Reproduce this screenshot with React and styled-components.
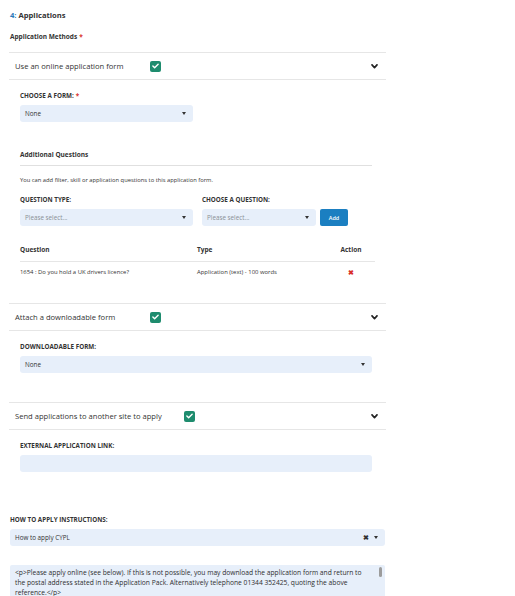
import React from "react";
import styled, { createGlobalStyle } from "styled-components";

const GlobalStyle = createGlobalStyle`
  body {
    margin: 0;
    background: #ffffff;
    font-family: "Open Sans", "Noto Sans", sans-serif;
    color: #333333;
    overflow: hidden;
  }
`;

const Page = styled.div`
  width: 515px;
  padding: 10px 0 0 0;
`;

const Wrap = styled.div`
  width: 377px;
  margin-left: 9px;
`;

const Title = styled.h2`
  margin: 0 0 0 1px;
  font-size: 7.6px;
  line-height: 11px;
  font-weight: 700;
  color: #333;
  span {
    color: #2a7ab8;
  }
`;

const MethodsLabel = styled.div`
  margin: 11px 0 11px 1px;
  font-size: 6.5px;
  line-height: 9px;
  font-weight: 700;
`;

const Req = styled.span`
  color: #d9302a;
  margin-left: 2px;
`;

const Section = styled.section`
  border-top: 1px solid #e6e6e6;
`;

const Header = styled.div`
  display: flex;
  align-items: center;
  height: 26px;
  padding: 0 8px 0 6px;
  border-bottom: 1px solid #e6e6e6;
  font-size: 7.6px;
  color: #333;
`;

const HeaderText = styled.span`
  width: ${(p) => p.$w}px;
`;

const Check = styled.span`
  width: 11px;
  height: 11px;
  border-radius: 2px;
  background: #1e8c6e;
  display: inline-flex;
  align-items: center;
  justify-content: center;
`;

const Chevron = styled.span`
  margin-left: auto;
  display: inline-flex;
`;

const Body = styled.div`
  padding: ${(p) => p.$pad};
`;

const FieldLabel = styled.div`
  font-size: 6.3px;
  line-height: 8px;
  font-weight: 700;
  text-transform: uppercase;
  color: #333;
  margin: 0 0 5px 0;
`;

const Select = styled.div`
  width: ${(p) => p.$w};
  height: 17px;
  border-radius: 3px;
  background: #e7effa;
  display: flex;
  align-items: center;
  padding: 0 7px 0 5px;
  box-sizing: border-box;
  font-size: 6.3px;
  color: ${(p) => (p.$placeholder ? "#8a8f96" : "#333")};
`;

const Caret = styled.span`
  margin-left: ${(p) => (p.$tight ? "0" : "auto")};
  width: 0;
  height: 0;
  border-left: 2.5px solid transparent;
  border-right: 2.5px solid transparent;
  border-top: 3px solid #333;
`;

const Clear = styled.span`
  margin-left: auto;
  margin-right: 5px;
  font-size: 7px;
  font-weight: 700;
  color: #333;
`;

const SubHeading = styled.div`
  margin-top: 29px;
  font-size: 6.5px;
  line-height: 8px;
  font-weight: 700;
  padding-bottom: 6px;
  border-bottom: 1px solid #e0e0e0;
  width: 352px;
`;

const Help = styled.div`
  margin: 10px 0 12px 0;
  font-size: 5.8px;
  line-height: 8px;
  color: #333;
`;

const QuestionGrid = styled.div`
  display: grid;
  grid-template-columns: 173px 114px 28px;
  column-gap: 9px;
  align-items: end;
`;

const AddButton = styled.button`
  width: 28px;
  height: 17px;
  margin-left: -5px;
  border: none;
  border-radius: 2px;
  background: #1b7fc1;
  color: #fff;
  font-family: inherit;
  font-size: 5.5px;
  font-weight: 600;
  padding: 0;
  cursor: pointer;
`;

const Table = styled.div`
  margin-top: 14px;
  width: 355px;
`;

const TRow = styled.div`
  display: grid;
  grid-template-columns: 177px 1fr 48px;
  align-items: center;
  height: ${(p) => p.$h}px;
  font-size: ${(p) => (p.$head ? "6.5px" : "5.9px")};
  font-weight: ${(p) => (p.$head ? 700 : 400)};
  border-bottom: ${(p) => (p.$head ? "1px solid #e6e6e6" : "none")};
  padding-bottom: ${(p) => (p.$head ? "2px" : "0")};
`;

const Cell = styled.span`
  text-align: ${(p) => p.$align || "left"};
  white-space: nowrap;
`;

const Remove = styled.span`
  color: #d9302a;
  font-size: 7px;
  font-weight: 700;
  text-align: center;
`;

const Instructions = styled.div`
  margin: 44px 0 0 1px;
`;

const TextArea = styled.div`
  position: relative;
  margin-top: 19px;
  width: 375px;
  height: 60px;
  background: #e7effa;
  border-radius: 2px;
  box-sizing: border-box;
  padding: 3px 12px 0 5px;
  font-size: 6.7px;
  line-height: 10px;
  color: #2e2e2e;
`;

const ScrollThumb = styled.span`
  position: absolute;
  right: 3px;
  top: 2px;
  width: 3px;
  height: 10px;
  border-radius: 2px;
  background: #9c9c9c;
`;

const CheckIcon = () => (
  <svg width="7" height="6" viewBox="0 0 8 6">
    <polyline points="1,3 3,5 7,1" fill="none" stroke="#fff" strokeWidth="1.6" strokeLinecap="round" strokeLinejoin="round" />
  </svg>
);

const ChevronIcon = () => (
  <svg width="7" height="5" viewBox="0 0 8 6">
    <polyline points="1,1 4,4.3 7,1" fill="none" stroke="#222" strokeWidth="2" strokeLinecap="round" strokeLinejoin="round" />
  </svg>
);

const MethodHeader = ({ label, w }) => (
  <Header>
    <HeaderText $w={w}>{label}</HeaderText>
    <Check>
      <CheckIcon />
    </Check>
    <Chevron>
      <ChevronIcon />
    </Chevron>
  </Header>
);

export default function App() {
  return (
    <Page>
      <GlobalStyle />
      <Wrap>
        <Title>
          <span>4:</span> Applications
        </Title>
        <MethodsLabel>
          Application Methods<Req>*</Req>
        </MethodsLabel>

        <Section>
          <MethodHeader label="Use an online application form" w={135} />
          <Body $pad="12px 0 21px 11px">
            <FieldLabel>
              Choose a form:<Req>*</Req>
            </FieldLabel>
            <Select $w="173px">
              None
              <Caret />
            </Select>

            <SubHeading>Additional Questions</SubHeading>
            <Help>You can add filter, skill or application questions to this application form.</Help>

            <QuestionGrid>
              <div>
                <FieldLabel>Question type:</FieldLabel>
                <Select $w="173px" $placeholder>
                  Please select...
                  <Caret />
                </Select>
              </div>
              <div>
                <FieldLabel>Choose a question:</FieldLabel>
                <Select $w="114px" $placeholder>
                  Please select...
                  <Caret />
                </Select>
              </div>
              <AddButton>Add</AddButton>
            </QuestionGrid>

            <Table>
              <TRow $head $h={19}>
                <Cell>Question</Cell>
                <Cell>Type</Cell>
                <Cell $align="center">Action</Cell>
              </TRow>
              <TRow $h={20}>
                <Cell>1654 : Do you hold a UK drivers licence?</Cell>
                <Cell>Application (text) - 100 words</Cell>
                <Remove>✖</Remove>
              </TRow>
            </Table>
          </Body>
        </Section>

        <Section>
          <MethodHeader label="Attach a downloadable form" w={135} />
          <Body $pad="12px 14px 29px 11px">
            <FieldLabel>Downloadable form:</FieldLabel>
            <Select $w="352px">
              None
              <Caret />
            </Select>
          </Body>
        </Section>

        <Section>
          <MethodHeader label="Send applications to another site to apply" w={169} />
          <Body $pad="12px 14px 0 11px">
            <FieldLabel>External application link:</FieldLabel>
            <Select $w="352px" />
          </Body>
        </Section>

        <Instructions>
          <FieldLabel>How to apply instructions:</FieldLabel>
          <Select $w="375px">
            How to apply CYPL
            <Clear>✖</Clear>
            <Caret $tight />
          </Select>
          <TextArea>
            &lt;p&gt;Please apply online (see below). If this is not possible, you may download the application form and return to
            <br />
            the postal address stated in the Application Pack. Alternatively telephone 01344 352425, quoting the above
            <br />
            reference.&lt;/p&gt;
            <ScrollThumb />
          </TextArea>
        </Instructions>
      </Wrap>
    </Page>
  );
}
